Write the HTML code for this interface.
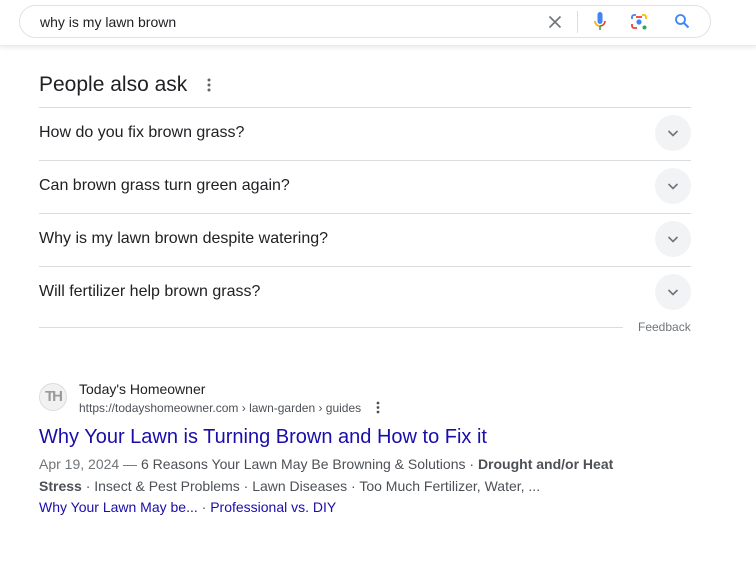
<!DOCTYPE html>
<html><head><meta charset="utf-8"><style>
*{margin:0;padding:0;box-sizing:border-box}
body{width:756px;height:569px;background:#fff;font-family:"Liberation Sans",Arial,sans-serif;position:relative;overflow:hidden;color:#202124}
.hdr{position:absolute;left:0;top:0;width:756px;height:46px;background:#fff;box-shadow:0 2px 4px rgba(0,0,0,0.08);border-bottom:1px solid #ebebeb}
.sb{position:absolute;left:19px;top:5px;width:692px;height:33px;border:1px solid #dfe1e5;border-radius:17px}
.q{position:absolute;left:20px;top:8px;font-size:14px;color:#202124}
.abs{position:absolute}
.t{position:absolute;left:39px;font-size:16px;color:#202124}
.ln{position:absolute;left:39px;width:652px;height:1px;background:#dadce0}
.cv{position:absolute;left:655px;width:36px;height:36px;border-radius:50%;background:#f1f3f4}
.cv svg{position:absolute;left:10px;top:10px}
</style></head><body>
<div class="hdr"></div>
<div class="sb"><div class="q">why is my lawn brown</div>
<svg class="abs" style="left:528px;top:9px" width="14" height="14" viewBox="0 0 14 14"><path d="M1.5 1.5L12.5 12.5M12.5 1.5L1.5 12.5" stroke="#70757a" stroke-width="1.6"/></svg>
<div class="abs" style="left:557px;top:5px;width:1px;height:22px;background:#dadce0"></div>
<svg class="abs" style="left:573px;top:6px" width="14" height="22" viewBox="0 0 14 22"><rect x="4.5" y="0" width="5" height="12" rx="2.5" fill="#4285f4"/><path d="M2 9a5 5 0 0 0 10 0" stroke="#ea4335" stroke-width="1.6" fill="none"/><path d="M2 9a5 5 0 0 0 5 5" stroke="#fbbc04" stroke-width="1.6" fill="none"/><rect x="6.2" y="14" width="1.6" height="4" fill="#34a853"/></svg>
<svg class="abs" style="left:610px;top:7px" width="18" height="18" viewBox="0 0 18 18"><path d="M2 6V4a2 2 0 0 1 2-2h2" stroke="#4285f4" stroke-width="1.8" fill="none"/><path d="M12 2h2a2 2 0 0 1 2 2v2" stroke="#fbbc04" stroke-width="1.8" fill="none"/><path d="M2 11v2a2 2 0 0 0 2 2h3" stroke="#ea4335" stroke-width="1.8" fill="none"/><path d="M6 4h6" stroke="#ea4335" stroke-width="1.8"/><circle cx="9" cy="9" r="2.6" fill="#4285f4"/><circle cx="14.5" cy="14.5" r="2" fill="#34a853"/></svg>
<svg class="abs" style="left:654px;top:7px" width="16" height="16" viewBox="0 0 16 16"><circle cx="6.5" cy="6.5" r="4.5" stroke="#4285f4" stroke-width="1.8" fill="none"/><path d="M10 10l4.5 4.5" stroke="#4285f4" stroke-width="2"/></svg>
</div>
<div class="abs" style="left:39px;top:73px;font-size:21px;color:#202124">People also ask</div>
<svg class="abs" style="left:207px;top:78px" width="4" height="14" viewBox="0 0 4 14"><circle cx="2" cy="2" r="1.5" fill="#5f6368"/><circle cx="2" cy="7" r="1.5" fill="#5f6368"/><circle cx="2" cy="12" r="1.5" fill="#5f6368"/></svg>
<div class="ln" style="top:107px"></div>
<div class="t" style="top:124px">How do you fix brown grass?</div>
<div class="cv" style="top:115px"><svg width="16" height="16" viewBox="0 0 16 16"><path d="M3.5 6l4.5 4.5L12.5 6" stroke="#70757a" stroke-width="1.6" fill="none"/></svg></div>
<div class="ln" style="top:160px"></div>
<div class="t" style="top:177px">Can brown grass turn green again?</div>
<div class="cv" style="top:168px"><svg width="16" height="16" viewBox="0 0 16 16"><path d="M3.5 6l4.5 4.5L12.5 6" stroke="#70757a" stroke-width="1.6" fill="none"/></svg></div>
<div class="ln" style="top:213px"></div>
<div class="t" style="top:230px">Why is my lawn brown despite watering?</div>
<div class="cv" style="top:221px"><svg width="16" height="16" viewBox="0 0 16 16"><path d="M3.5 6l4.5 4.5L12.5 6" stroke="#70757a" stroke-width="1.6" fill="none"/></svg></div>
<div class="ln" style="top:266px"></div>
<div class="t" style="top:283px">Will fertilizer help brown grass?</div>
<div class="cv" style="top:274px"><svg width="16" height="16" viewBox="0 0 16 16"><path d="M3.5 6l4.5 4.5L12.5 6" stroke="#70757a" stroke-width="1.6" fill="none"/></svg></div>
<div class="ln" style="top:327px;width:584px"></div>
<div class="abs" style="left:638px;top:320px;font-size:12px;color:#70757a">Feedback</div>
<div class="abs" style="left:39px;top:383px;width:28px;height:28px;border-radius:50%;background:#f1f1f1;border:1px solid #dadce0;font-size:15px;font-weight:bold;color:#9a9a9a;text-align:center;line-height:26px;letter-spacing:-2px;font-family:'Liberation Sans Narrow','Liberation Sans',sans-serif">TH</div>
<div class="abs" style="left:79px;top:381px;font-size:14px;color:#202124">Today's Homeowner</div>
<div class="abs" style="left:79px;top:401px;font-size:12px;color:#4d5156">https://todayshomeowner.com › lawn-garden › guides</div>
<svg class="abs" style="left:376px;top:401px" width="4" height="13" viewBox="0 0 4 13"><circle cx="2" cy="2" r="1.4" fill="#4d5156"/><circle cx="2" cy="6.5" r="1.4" fill="#4d5156"/><circle cx="2" cy="11" r="1.4" fill="#4d5156"/></svg>
<div class="abs" style="left:39px;top:426px;font-size:20px;color:#1a0dab">Why Your Lawn is Turning Brown and How to Fix it</div>
<div class="abs" style="left:39px;top:453px;width:600px;font-size:14px;line-height:22px;color:#4d5156"><span style="color:#70757a">Apr 19, 2024 — </span>6 Reasons Your Lawn May Be Browning &amp; Solutions · <b>Drought and/or Heat Stress</b> · Insect &amp; Pest Problems · Lawn Diseases · Too Much Fertilizer, Water, ...</div>
<div class="abs" style="left:39px;top:499px;font-size:14px;color:#1a0dab">Why Your Lawn May be... <span style="color:#4d5156">·</span> Professional vs. DIY</div>
</body></html>
